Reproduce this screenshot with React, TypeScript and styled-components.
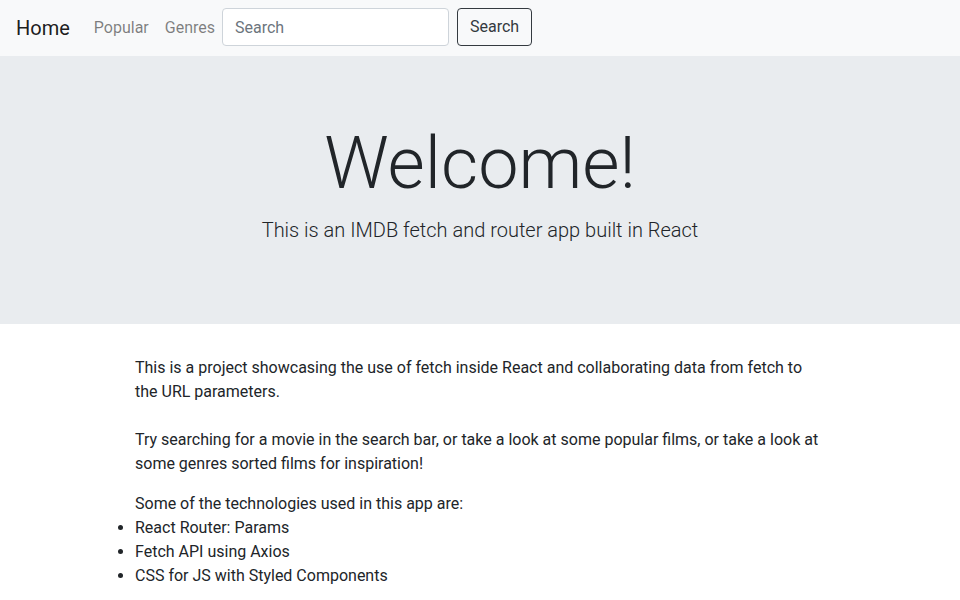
import React from "react";
import styled, { createGlobalStyle } from "styled-components";

const Global = createGlobalStyle`
  * { box-sizing: border-box; }
  body {
    margin: 0;
    font-family: Roboto, "Liberation Sans", Arial, sans-serif;
    font-size: 16px;
    line-height: 1.5;
    color: #212529;
    background: #fff;
  }
`;

const Navbar = styled.nav`
  display: flex;
  align-items: center;
  padding: 8px 16px;
  background: #f8f9fa;
`;

const Brand = styled.a`
  font-size: 20px;
  line-height: 30px;
  padding: 5px 0;
  margin-right: 16px;
  color: rgba(0, 0, 0, 0.9);
  text-decoration: none;
`;

const NavList = styled.div`
  display: flex;
`;

const NavLink = styled.a`
  padding: 8px;
  color: rgba(0, 0, 0, 0.5);
  text-decoration: none;
`;

const SearchForm = styled.form`
  display: flex;
  align-items: center;
  align-self: flex-start;
  margin-left: -1px;
`;

const Input = styled.input`
  width: 227px;
  height: 38px;
  padding: 6px 12px;
  margin-right: 8px;
  font-family: inherit;
  font-size: 16px;
  color: #495057;
  background: #fff;
  border: 1px solid #ced4da;
  border-radius: 4px;
  outline: none;
  &::placeholder { color: #6c757d; }
`;

const Button = styled.button`
  height: 38px;
  padding: 6px 12px;
  font-family: inherit;
  font-size: 16px;
  line-height: 24px;
  color: #343a40;
  background: transparent;
  border: 1px solid #343a40;
  border-radius: 4px;
`;

const Jumbotron = styled.header`
  background: #e9ecef;
  padding: 65px 32px 63px;
  margin-bottom: 32px;
  text-align: center;
`;

const Display = styled.h1`
  margin: 0 0 8px;
  font-size: 72px;
  font-weight: 300;
  line-height: 1.2;
`;

const Lead = styled.p`
  margin: 0 0 16px;
  font-size: 20px;
  font-weight: 300;
  line-height: 30px;
`;

const Container = styled.main`
  width: 720px;
  margin: 0 auto;
  padding: 0 15px;
`;

const Paragraph = styled.p`
  margin: 0 0 16px;
`;

const Intro = styled.div``;

const List = styled.ul`
  margin: 0;
  padding: 0;
`;

export default function App() {
  return (
    <>
      <Global />
      <Navbar>
        <Brand href="#">Home</Brand>
        <NavList>
          <NavLink href="#">Popular</NavLink>
          <NavLink href="#">Genres</NavLink>
        </NavList>
        <SearchForm onSubmit={(e) => e.preventDefault()}>
          <Input type="text" placeholder="Search" />
          <Button type="submit">Search</Button>
        </SearchForm>
      </Navbar>
      <Jumbotron>
        <Display>Welcome!</Display>
        <Lead>This is an IMDB fetch and router app built in React</Lead>
      </Jumbotron>
      <Container>
        <Paragraph>
          This is a project showcasing the use of fetch inside React and collaborating data from fetch to the URL
          parameters.
          <br />
          <br />
          Try searching for a movie in the search bar, or take a look at some popular films, or take a look at some
          genres sorted films for inspiration!
        </Paragraph>
        <Intro>Some of the technologies used in this app are:</Intro>
        <List>
          <li>React Router: Params</li>
          <li>Fetch API using Axios</li>
          <li>CSS for JS with Styled Components</li>
        </List>
      </Container>
    </>
  );
}
